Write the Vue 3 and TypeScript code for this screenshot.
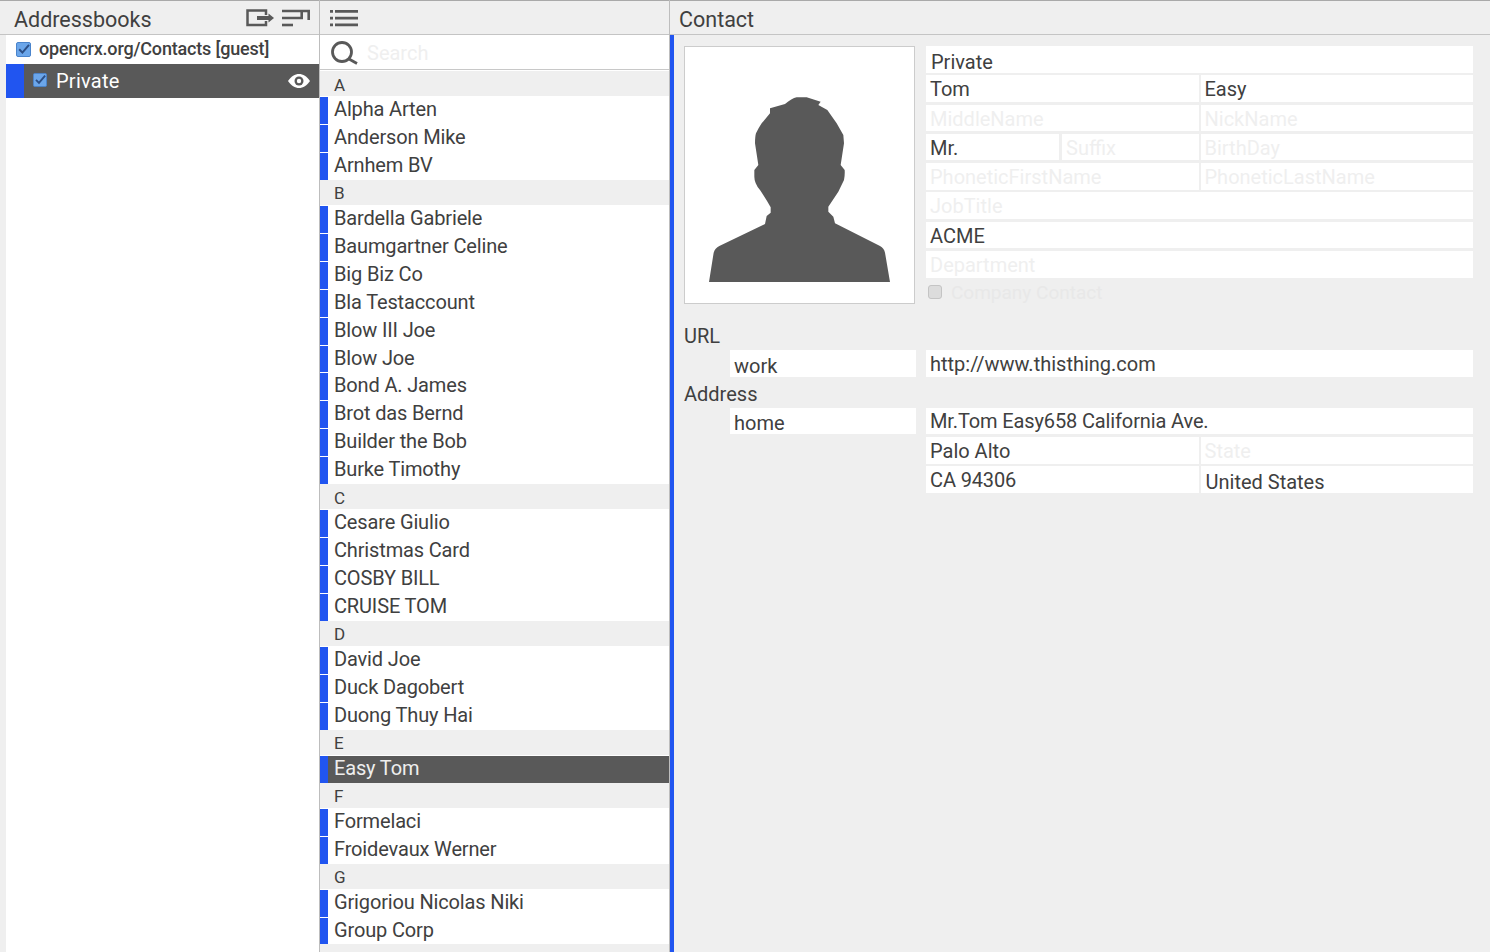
<script setup lang="ts">
type Row = { group?: string; name?: string; selected?: boolean }
const rows: Row[] = [
  { group: 'A' },
  { name: 'Alpha Arten' }, { name: 'Anderson Mike' }, { name: 'Arnhem BV' },
  { group: 'B' },
  { name: 'Bardella Gabriele' }, { name: 'Baumgartner Celine' }, { name: 'Big Biz Co' }, { name: 'Bla Testaccount' },
  { name: 'Blow III Joe' }, { name: 'Blow Joe' }, { name: 'Bond A. James' }, { name: 'Brot das Bernd' },
  { name: 'Builder the Bob' }, { name: 'Burke Timothy' },
  { group: 'C' },
  { name: 'Cesare Giulio' }, { name: 'Christmas Card' }, { name: 'COSBY BILL' }, { name: 'CRUISE TOM' },
  { group: 'D' },
  { name: 'David Joe' }, { name: 'Duck Dagobert' }, { name: 'Duong Thuy Hai' },
  { group: 'E' },
  { name: 'Easy Tom', selected: true },
  { group: 'F' },
  { name: 'Formelaci' }, { name: 'Froidevaux Werner' },
  { group: 'G' },
  { name: 'Grigoriou Nicolas Niki' }, { name: 'Group Corp' },
  { group: 'H' },
]
</script>

<template>
  <div class="app">
    <section class="col books">
      <header class="head">
        <span class="title">Addressbooks</span>
        <span class="tools">
          <svg width="28" height="18" viewBox="0 0 28 18" fill="none" stroke="#595959" stroke-width="2.500">
            <path d="M20 6V1.500H1.500V16H20V12" /><path d="M11 9h12" stroke-width="4" /><path d="M22.500 4.500L28 9l-5.500 4.500z" fill="#595959" stroke="none" />
          </svg>
          <svg width="28" height="18" viewBox="0 0 28 18" fill="none" stroke="#595959" stroke-width="2.600">
            <path d="M0 2H26.700V11" /><path d="M0 9H19.700V3" /><path d="M0 16H11" />
          </svg>
        </span>
      </header>
      <div class="book-list">
        <div class="book">
          <svg class="check" viewBox="0 0 15 15"><rect x=".5" y=".5" width="14" height="14" rx="1.500" fill="#6ba6ea" stroke="#4a84cc" /><path d="M3.200 7.300l3.200 3.300L13 2.800" fill="none" stroke="#2c4f86" stroke-width="2" /></svg>
          <span>opencrx.org/Contacts [guest]</span>
        </div>
        <div class="book active">
          <i class="mark wide"></i>
          <svg class="check" viewBox="0 0 15 15"><rect x=".5" y=".5" width="14" height="14" rx="1.500" fill="#6ba6ea" stroke="#4a84cc" /><path d="M3.200 7.300l3.200 3.300L13 2.800" fill="none" stroke="#2c4f86" stroke-width="2" /></svg>
          <span class="book-name">Private</span>
          <svg class="eye" width="22" height="14" viewBox="0 0 22 14"><path d="M0 7C3 2.500 7 0 11 0s8 2.500 11 7c-3 4.500-7 7-11 7S3 11.500 0 7z" fill="#fff" /><circle cx="11" cy="7" r="4.500" fill="#595959" /><circle cx="11" cy="7" r="2.200" fill="#fff" /></svg>
        </div>
      </div>
    </section>

    <section class="col contacts">
      <header class="head">
        <svg width="28" height="18" viewBox="0 0 28 18" fill="#595959">
          <path d="M0 1h3v2.800H0zM0 7.700h3v2.800H0zM0 14.500h3v2.800H0zM5 1h23v2.800H5zM5 7.700h23v2.800H5zM5 14.500h23v2.800H5z" />
        </svg>
      </header>
      <div class="search">
        <svg width="28" height="24" viewBox="0 0 28 24" fill="none" stroke="#595959" stroke-width="2.800">
          <circle cx="11" cy="11" r="9.500" /><path d="M18 18l8 4.500" />
        </svg>
        <span class="ph">Search</span>
      </div>
      <div class="list">
        <template v-for="r in rows" :key="r.group ?? r.name">
          <div v-if="r.group" class="group">{{ r.group }}</div>
          <div v-else class="item" :class="{ selected: r.selected }">
            <i class="mark"></i>
            <span class="name">{{ r.name }}</span>
          </div>
        </template>
      </div>
    </section>

    <section class="col detail">
      <header class="head"><span class="title">Contact</span></header>
      <div class="body">
        <div class="top">
          <div class="photo">
            <svg viewBox="45 141 687 768" preserveAspectRatio="none">
              <path fill="#595959" d="M117 846L131 758Q135 745 148 738L285 672L290 648L302 638L302 622Q290 600 270 570Q253 550 253 530L253 510L265 495L255 430Q255 410 258 400Q265 385 275 370L300 340L300 325L345 312Q365 295 380 292L410 292L452 305L445 315L472 330L500 370L520 405L522 430L512 495L524 510Q525 525 522 540L505 575L475 620L475 635L490 650L495 670L630 738Q642 745 645 758L660 846Z" />
            </svg>
          </div>
          <div class="form">
            <div class="f first">Private</div>
            <div class="split"><div class="f">Tom</div><div class="f">Easy</div></div>
            <div class="split"><div class="f p">MiddleName</div><div class="f p">NickName</div></div>
            <div class="split">
              <div class="split inner"><div class="f">Mr.</div><div class="f p">Suffix</div></div>
              <div class="f p">BirthDay</div>
            </div>
            <div class="split"><div class="f p">PhoneticFirstName</div><div class="f p">PhoneticLastName</div></div>
            <div class="f p">JobTitle</div>
            <div class="f">ACME</div>
            <div class="f p">Department</div>
            <div class="company"><i class="box"></i><span class="company-label">Company Contact</span></div>
          </div>
        </div>

        <div class="label url">URL</div>
        <div class="line">
          <div class="f kind">work</div>
          <div class="f grow">http://www.thisthing.com</div>
        </div>
        <div class="label addr">Address</div>
        <div class="line">
          <div class="f kind home">home</div>
          <div class="stack">
            <div class="f tight street">Mr.Tom Easy658 California Ave.</div>
            <div class="split"><div class="f">Palo Alto</div><div class="f p">State</div></div>
            <div class="split"><div class="f tight">CA 94306</div><div class="f country">United States</div></div>
          </div>
        </div>
      </div>
    </section>
  </div>
</template>

<style>
html, body { margin: 0; height: 100%; overflow: hidden; background: #efefef; }
</style>

<style scoped>
.app {
  display: grid;
  grid-template-columns: 320px 350px 1fr;
  height: 952px;
  overflow: hidden;
  background: #efefef;
  color: #404040;
  font: 20px/28px Roboto, sans-serif;
}
.col { display: flex; flex-direction: column; min-width: 0; height: 952px; overflow: hidden; }
.head {
  flex: none;
  box-sizing: border-box;
  height: 35px;
  display: flex;
  align-items: center;
  border-top: 1px solid #a9a9a9;
  border-bottom: 1px solid #c4c4c4;
  background: #efefef;
}
.title { font-size: 21.500px; padding-top: 5px; }
.books { border-right: 1px solid #bdbdbd; box-sizing: border-box; }
.books .head { padding: 0 9px 0 14px; justify-content: space-between; }
.tools { display: flex; gap: 8px; }
.book-list { flex: 1; margin-left: 6px; background: #fff; }
.book {
  box-sizing: border-box;
  display: flex;
  align-items: center;
  height: 29px;
  padding: 0 0 1px 10px;
  gap: 8px;
  font-size: 18px;
  font-weight: 500;
  letter-spacing: -.18px;
}
.check { width: 15px; height: 15px; flex: none; overflow: visible; }
.book.active {
  height: 34px;
  padding: 0;
  gap: 0;
  background: #595959;
  color: #fff;
  font-size: 20px;
  font-weight: 400;
  letter-spacing: .25px;
}
.mark { display: block; flex: none; width: 8px; align-self: stretch; background: #2155f0; }
.mark.wide { width: 18px; }
.book.active .check { width: 14px; height: 14px; margin: -3px 9px 0 9px; }
.book-name { flex: 1; }
.eye { margin-right: 9px; }

.contacts { border-right: 1px solid #bdbdbd; box-sizing: border-box; }
.contacts .head { padding-left: 10px; }
.search {
  flex: none;
  box-sizing: border-box;
  height: 35px;
  padding: 1px 0 0 11px;
  display: flex;
  align-items: center;
  gap: 8px;
  background: #fff;
  border-bottom: 1px solid #c8c8c8;
}
.ph { color: #efefef; font-size: 20px; }
.list { flex: 1; padding-top: 1px; background: #fff; overflow: hidden; }
.group {
  box-sizing: border-box;
  height: 25px;
  padding: 2.500px 0 0 14px;
  background: #efefef;
  font-size: 17px;
  line-height: 22px;
}
.item { display: flex; height: 27.950px; padding-top: 1px; box-sizing: border-box; line-height: 24px; letter-spacing: -.15px; }
.name { flex: 1; padding-left: 6px; }
.item.selected .name { color: #eee; background: #595959; }

.detail { min-width: 0; }
.body {
  flex: 1;
  border-left: 4px solid #2155f0;
  padding: 11px 17px 0 10px;
}
.detail .head { padding-left: 9px; }
.top { display: flex; gap: 11px; }
.photo {
  box-sizing: border-box;
  width: 231px;
  height: 258px;
  flex: none;
  background: #fff;
  border: 1px solid #ccc;
}
.photo svg { display: block; width: 100%; height: 100%; }
.form { flex: 1; display: flex; flex-direction: column; gap: 2.700px; min-width: 0; }
.f {
  box-sizing: border-box;
  height: 26.600px;
  padding-left: 4px;
  background: #fff;
  line-height: 29px;
  white-space: nowrap;
  min-width: 0;
}
.f.first { padding-left: 5px; line-height: 33px; }
.f.tight { letter-spacing: -.13px; }
.f.street { line-height: 27px; }
.f.country { padding-left: 5px; line-height: 33px; }
.p { color: #efefef; }
.split { display: grid; grid-template-columns: 1fr 1fr; gap: 2px; }
.split.inner { grid-template-columns: 133px 1fr; gap: 3px; }
.company {
  display: flex;
  align-items: center;
  gap: 9px;
  height: 24px;
  padding-left: 2px;
  color: #e8e8e8;
  font-size: 19px;
}
.company-label { padding-top: 2px; }
.box { display: block; width: 14px; height: 14px; box-sizing: border-box; border: 1px solid #c4c4c4; border-radius: 3px; background: #dcdcdc; }

.label { line-height: 26px; }
.label.url { margin-top: 19px; }
.label.addr { margin-top: 4px; }
.line { display: flex; gap: 10px; padding-left: 46px; margin-top: 1px; }
.kind { width: 186px; flex: none; padding-left: 4px; line-height: 33px; }
.kind.home { line-height: 31px; }
.grow { flex: 1; }
.stack { flex: 1; display: flex; flex-direction: column; gap: 2.700px; min-width: 0; }
</style>
